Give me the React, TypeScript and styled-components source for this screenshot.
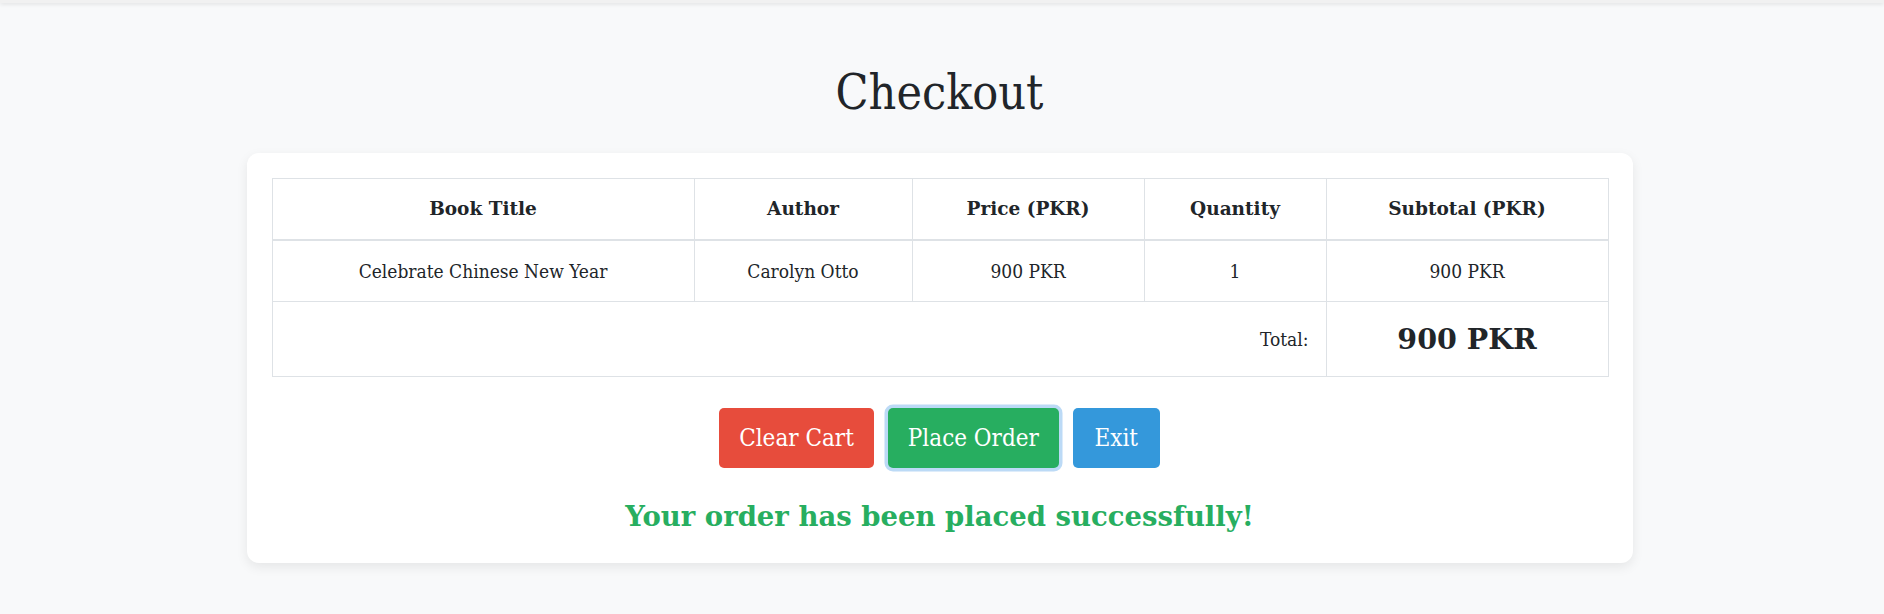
import styled, { createGlobalStyle } from "styled-components";

interface ICartItem {
  title: string;
  author: string;
  price: number;
  quantity: number;
}

const cart: ICartItem[] = [
  { title: "Celebrate Chinese New Year", author: "Carolyn Otto", price: 900, quantity: 1 },
];

const columns = [
  { label: "Book Title", width: 422 },
  { label: "Author", width: 218 },
  { label: "Price (PKR)", width: 232 },
  { label: "Quantity", width: 182 },
  { label: "Subtotal (PKR)", width: 282 },
];

const total = cart.reduce((sum, each) => sum + each.price * each.quantity, 0);

function App() {
  return (
    <>
      <GlobalStyle />
      <StyledTopBar />
      <StyledPage>
        <StyledH1>Checkout</StyledH1>

        <StyledCard>
          <StyledTable>
            <colgroup>
              {columns.map((col) => (
                <col key={col.label} style={{ width: col.width }} />
              ))}
            </colgroup>
            <thead>
              <tr>
                {columns.map((col) => (
                  <StyledTh key={col.label}>{col.label}</StyledTh>
                ))}
              </tr>
            </thead>
            <tbody>
              {cart.map((each, index) => (
                <tr key={index}>
                  <StyledTd>{each.title}</StyledTd>
                  <StyledTd>{each.author}</StyledTd>
                  <StyledTd>{each.price} PKR</StyledTd>
                  <StyledTd>{each.quantity}</StyledTd>
                  <StyledTd>{each.price * each.quantity} PKR</StyledTd>
                </tr>
              ))}
              <tr>
                <StyledTd colSpan={4} $align="right">
                  Total:
                </StyledTd>
                <StyledTotal>{total} PKR</StyledTotal>
              </tr>
            </tbody>
          </StyledTable>

          <StyledActions>
            <StyledButton $color="#e74c3c">Clear Cart</StyledButton>
            <StyledButton $color="#27ae60" $focused>
              Place Order
            </StyledButton>
            <StyledButton $color="#3498db">Exit</StyledButton>
          </StyledActions>

          <StyledSuccess>Your order has been placed successfully!</StyledSuccess>
        </StyledCard>
      </StyledPage>
    </>
  );
}

export default App;

const GlobalStyle = createGlobalStyle`
  body {
    margin: 0;
    background-color: #f8f9fa;
    color: #212529;
    font-family: "DejaVu Serif", "Liberation Serif", serif;
  }
`;

const StyledTopBar = styled.div`
  height: 3px;
  background-color: #f1f1f1;
  box-shadow: 0 1px 4px rgba(0, 0, 0, 0.12);
`;

const StyledPage = styled.main`
  padding: 0 5px 48px 0;
`;

const StyledH1 = styled.h1`
  margin: 61px 0 33px;
  font-size: 48px;
  font-weight: normal;
  font-stretch: condensed;
  line-height: 56px;
  text-align: center;
`;

const StyledCard = styled.section`
  width: 1386px;
  margin: 0 auto;
  box-sizing: border-box;
  padding: 25px 25px 30px;
  background-color: #ffffff;
  border-radius: 12px;
  box-shadow: 0 4px 12px rgba(0, 0, 0, 0.08);
`;

const StyledTable = styled.table`
  width: 100%;
  table-layout: fixed;
  border-collapse: collapse;
  font-size: 19px;
  line-height: 26px;
`;

const StyledTh = styled.th`
  padding: 17px;
  border: 1px solid #dee2e6;
  border-bottom: 2px solid #dee2e6;
  font-size: 18.5px;
  font-weight: bold;
  text-align: center;
`;

const StyledTd = styled.td<{ $align?: string }>`
  padding: 17px;
  border: 1px solid #dee2e6;
  font-stretch: condensed;
  text-align: ${(p) => p.$align || "center"};
`;

const StyledTotal = styled.td`
  padding: 17px;
  border: 1px solid #dee2e6;
  font-size: 28.5px;
  line-height: 40px;
  font-weight: bold;
  text-align: center;
`;

const StyledActions = styled.div`
  display: flex;
  justify-content: center;
  gap: 14px;
  margin-top: 31px;
`;

const StyledButton = styled.button<{ $color: string; $focused?: boolean }>`
  min-width: 87px;
  height: 60px;
  padding: 0 20px;
  border: none;
  border-radius: 5px;
  background-color: ${(p) => p.$color};
  color: #ffffff;
  font-family: inherit;
  font-stretch: condensed;
  font-size: 24px;
  cursor: pointer;
  box-shadow: ${(p) => (p.$focused ? "0 0 0 3.5px #bcdaf6" : "none")};
`;

const StyledSuccess = styled.p`
  margin: 31px 0 0;
  font-size: 27.5px;
  line-height: 34px;
  font-weight: bold;
  color: #27ae60;
  text-align: center;
`;
